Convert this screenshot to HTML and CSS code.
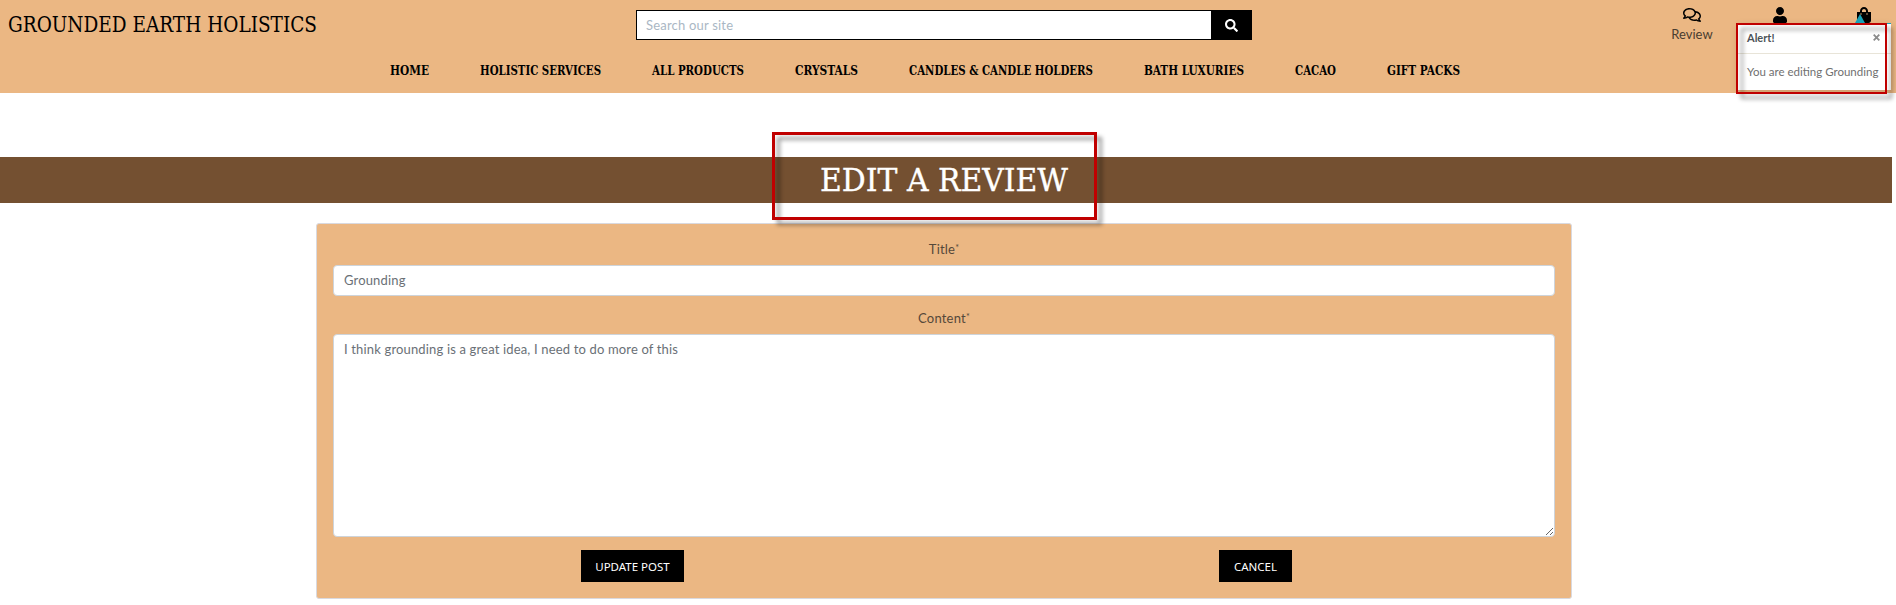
FILE: index.html
```
<!DOCTYPE html>
<html lang="en">
<head>
<meta charset="utf-8">
<title>Grounded Earth Holistics</title>
<link rel="stylesheet" href="styles.css">
</head>
<body>
<header class="site-header">
  <div class="top-row">
    <a class="brand"><svg width="320" height="34"><text x="0" y="22" textLength="309" lengthAdjust="spacingAndGlyphs">GROUNDED EARTH HOLISTICS</text></svg></a>
    <form class="search">
      <input class="search-input" type="text" placeholder="Search our site">
      <button class="search-btn" type="button" aria-label="Search"><svg width="13" height="13" viewBox="0 0 512 512"><path fill="#fff" d="M505 442.700L405.300 343c-4.500-4.500-10.600-7-17-7H372c27.600-35.300 44-79.700 44-128C416 93.100 322.900 0 208 0S0 93.100 0 208s93.100 208 208 208c48.300 0 92.700-16.400 128-44v16.300c0 6.400 2.500 12.500 7 17l99.700 99.700c9.400 9.400 24.600 9.400 33.900 0l28.300-28.300c9.400-9.400 9.400-24.600.1-34zM208 336c-70.700 0-128-57.200-128-128 0-70.700 57.200-128 128-128 70.700 0 128 57.200 128 128 0 70.700-57.200 128-128 128z"/></svg></button>
    </form>
    <div class="tools">
      <a class="tool tool-review">
        <svg width="18" height="16" viewBox="0 0 576 512"><path d="M532 386.200c27.500-27.100 44-61.100 44-98.200 0-80-76.500-146.100-176.200-157.900C368.300 72.500 294.300 32 208 32 93.100 32 0 103.600 0 192c0 37 16.500 71 44 98.200-15.300 30.700-37.300 54.500-37.700 54.900-6.300 6.700-8.100 16.500-4.400 25 3.600 8.500 12 14 21.200 14 53.500 0 96.700-20.200 125.200-38.800 9.200 2.100 18.700 3.700 28.400 4.900C208.100 407.600 281.800 448 368 448c20.800 0 40.800-2.400 59.800-6.800C456.300 459.700 499.400 480 553 480c9.200 0 17.500-5.500 21.200-14 3.600-8.500 1.900-18.300-4.400-25-.4-.3-22.500-24.100-37.800-54.800zm-392.800-92.300L122.100 305c-14.100 9.100-28.500 16.300-43.100 21.400 2.700-4.700 5.400-9.700 8-14.800l15.500-31.100L77.700 256C64.200 242.600 48 220.700 48 192c0-60.700 73.300-112 160-112s160 51.300 160 112-73.300 112-160 112c-16.500 0-33-1.900-49-5.600l-19.800-4.500zM498.300 352l-24.700 24.400 15.500 31.100c2.600 5.100 5.300 10.100 8 14.800-14.600-5.100-29-12.300-43.100-21.400l-17.100-11.100-19.900 4.600c-16 3.700-32.500 5.600-49 5.600-54 0-102.200-20.100-131.300-49.700C338 339.500 416 272.900 416 192c0-3.400-.4-6.700-.7-10C479.700 196.500 528 238.800 528 288c0 28.700-16.200 50.600-29.700 64z"/></svg>
        <span>Review</span>
      </a>
      <a class="tool tool-user" aria-label="Account"><svg width="14" height="16" viewBox="0 0 448 512"><path d="M224 256c70.700 0 128-57.300 128-128S294.700 0 224 0 96 57.300 96 128s57.300 128 128 128zm89.600 32h-16.700c-22.200 10.200-46.900 16-72.900 16s-50.600-5.800-72.900-16h-16.700C60.200 288 0 348.200 0 422.400V464c0 26.500 21.500 48 48 48h352c26.500 0 48-21.500 48-48v-41.600c0-74.200-60.200-134.400-134.400-134.400z"/></svg></a>
      <a class="tool tool-bag" aria-label="Bag"><svg width="14" height="16" viewBox="0 0 448 512"><path d="M352 160v-32C352 57.400 294.600 0 224 0 153.400 0 96 57.400 96 128v32H0v272c0 44.200 35.800 80 80 80h288c44.200 0 80-35.800 80-80V160h-96zm-192-32c0-35.300 28.700-64 64-64s64 28.700 64 64v32H160v-32zm160 120c-13.300 0-24-10.700-24-24s10.700-24 24-24 24 10.700 24 24-10.700 24-24 24zm-192 0c-13.300 0-24-10.700-24-24s10.700-24 24-24 24 10.700 24 24-10.700 24-24 24z"/></svg></a>
    </div>
  </div>
  <nav class="nav">
    <a><svg width="39" height="20"><text y="15" textLength="39" lengthAdjust="spacingAndGlyphs">HOME</text></svg></a>
    <a><svg width="121" height="20"><text y="15" textLength="121" lengthAdjust="spacingAndGlyphs">HOLISTIC SERVICES</text></svg></a>
    <a><svg width="92" height="20"><text y="15" textLength="92" lengthAdjust="spacingAndGlyphs">ALL PRODUCTS</text></svg></a>
    <a><svg width="63" height="20"><text y="15" textLength="63" lengthAdjust="spacingAndGlyphs">CRYSTALS</text></svg></a>
    <a><svg width="184" height="20"><text y="15" textLength="184" lengthAdjust="spacingAndGlyphs">CANDLES &amp; CANDLE HOLDERS</text></svg></a>
    <a><svg width="100" height="20"><text y="15" textLength="100" lengthAdjust="spacingAndGlyphs">BATH LUXURIES</text></svg></a>
    <a><svg width="41" height="20"><text y="15" textLength="41" lengthAdjust="spacingAndGlyphs">CACAO</text></svg></a>
    <a><svg width="73" height="20"><text y="15" textLength="73" lengthAdjust="spacingAndGlyphs">GIFT PACKS</text></svg></a>
  </nav>
  <div class="toast">
    <i class="toast-arrow"></i>
    <div class="toast-head"><strong>Alert!</strong><svg width="7" height="7" viewBox="0 0 7 7"><path d="M.7.7l5.600 5.600M6.300.7L.7 6.300" stroke="#8b8b8b" stroke-width="1.800"/></svg></div>
    <div class="toast-body">You are editing Grounding</div>
  </div>
  <div class="mark mark-toast"></div>
</header>
<main>
  <div class="banner">
    <h1><svg width="260" height="43"><text y="31" textLength="248" lengthAdjust="spacingAndGlyphs">EDIT A REVIEW</text></svg></h1>
    <div class="mark mark-title"></div>
  </div>
  <form class="card">
    <label class="label" for="title">Title<sup>*</sup></label>
    <input class="field" id="title" type="text" value="Grounding">
    <label class="label label-content" for="content">Content<sup>*</sup></label>
    <textarea class="field area" id="content">I think grounding is a great idea, I need to do more of this</textarea>
    <div class="actions">
      <div><button class="btn btn-update" type="button">UPDATE POST</button></div>
      <div><button class="btn btn-cancel" type="button">CANCEL</button></div>
    </div>
  </form>
</main>
</body>
</html>
```
FILE: styles.css
```
* { box-sizing: border-box; }
html, body { margin: 0; height: 605px; overflow: hidden; }
body { background: #fff; font-family: Lato, "Liberation Sans", sans-serif; font-size: 13px; color: #495057; }
svg { display: block; overflow: visible; }

.site-header { position: relative; height: 93px; background: #ebb783; }
.top-row { display: grid; grid-template-columns: 636px 616px 1fr; height: 60px; }
.brand { padding: 10px 0 0 8px; }
.brand text { font: 22px "DejaVu Serif Condensed", "DejaVu Serif", serif; }
.search { display: flex; height: 30px; margin-top: 10px; border: 1px solid #000; }
.search-input { flex: 1; min-width: 0; border: 0; padding: 0 9px; background: #fff; font: 13px Lato, sans-serif; letter-spacing: .2px; }
.search-input::placeholder { color: #aab7c4; opacity: 1; }
.search-btn { width: 40px; padding: 0; border: 0; background: #000; display: flex; align-items: center; justify-content: center; }
.tools { display: grid; grid-template-columns: 80px 95px 74px; padding: 7px 0 0 400px; color: #4a3d30; }
.tool { display: flex; flex-direction: column; align-items: center; font-size: 13px; line-height: 18px; }
.tool svg { fill: #000; }
.tool-review span { margin-top: 2px; }
.nav { display: flex; gap: 51px; padding-left: 390px; }
.nav text { font: bold 13px "DejaVu Serif Condensed", "DejaVu Serif", serif; }

.toast { position: absolute; left: 1738px; top: 23px; width: 153px; height: 67px; background: #fff; border-top: 1px solid #17a2b8; color: #707070; box-shadow: 0 3px 8px rgba(0,0,0,.15); }
.toast-arrow { position: absolute; left: 117px; top: -10px; border: solid transparent; border-width: 0 5px 9px; border-bottom-color: #17a2b8; }
.toast-head { display: flex; align-items: center; justify-content: space-between; height: 30px; padding: 0 11px 2px 9px; border-bottom: 1px solid #e8e4d8; font-size: 11px; color: #4d5358; }
.toast-body { padding: 9px 0 0 9px; font-size: 11.500px; line-height: 17px; white-space: nowrap; }

.mark { position: absolute; border: 3px solid #c00000; filter: drop-shadow(5px 5px 2px rgba(0,0,0,.4)); pointer-events: none; }
.mark-toast { left: 1736px; top: 23px; width: 151px; height: 71px; border-width: 2px; }
.mark-title { left: 772px; top: -25px; width: 325px; height: 88px; }

.banner { position: relative; z-index: 1; width: 1892px; height: 46px; margin-top: 64px; padding-left: 820px; background: #745031; }
.banner h1 { margin: 0; padding-top: 3px; }
.banner text { font: 31px "DejaVu Serif Condensed", "DejaVu Serif", serif; fill: #fff; stroke: #fff; stroke-width: .3px; }

.card { display: flex; flex-direction: column; width: 1256px; height: 376px; margin: 20px 0 0 316px; padding: 16px; border: 1px solid #d9d9df; border-radius: 3px; background: #ebb783; }
.label { height: 25px; line-height: 18px; text-align: center; color: #55483a; letter-spacing: .2px; }
.label sup { font-size: 9px; line-height: 0; vertical-align: 3px; }
.label-content { margin-top: 13px; }
.field { display: block; width: 1222px; height: 31px; padding: 0 10px 1px; border: 1px solid #ced4da; border-radius: 4px; background: #fff; color: #6a7076; font: 13px/20px Lato, sans-serif; letter-spacing: .16px; outline: 0; }
.area { height: 203px; padding: 4px 10px; resize: vertical; margin: 0; }
.actions { display: grid; grid-template-columns: 638px 1fr; padding: 13px 0 0 248px; }
.btn { height: 32px; border: 0; padding: 0; background: #000; color: #fff; font: 11.500px "Noto Sans", sans-serif; }
.btn-update { width: 103px; }
.btn-cancel { width: 73px; }
```
